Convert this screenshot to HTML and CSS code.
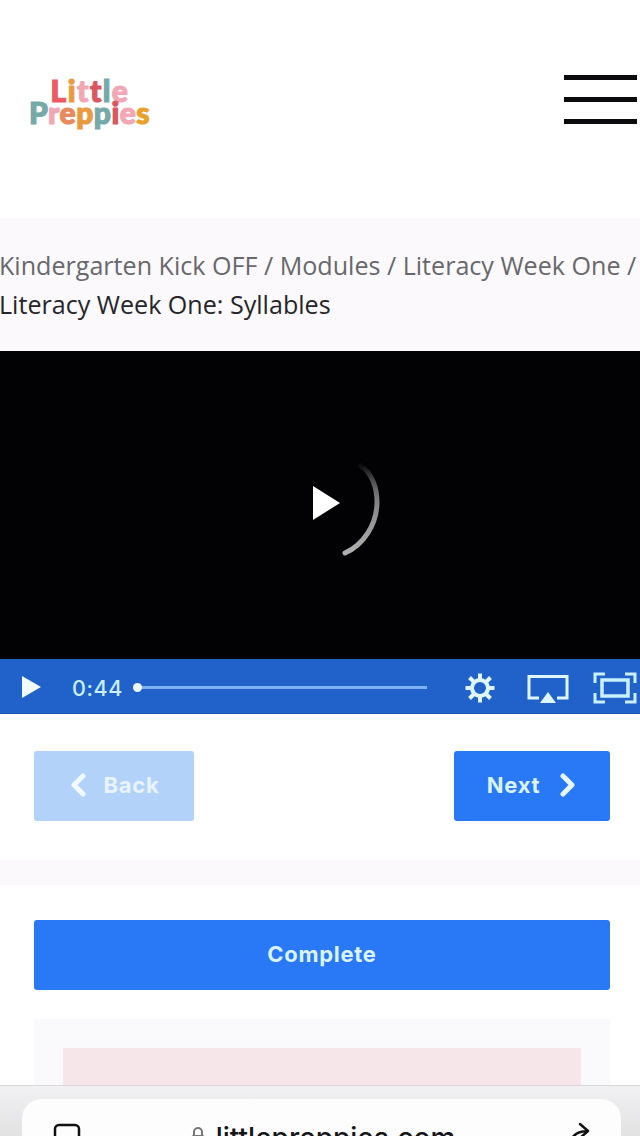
FILE: index.html
```html
<!DOCTYPE html>
<html lang="en">
<head>
<meta charset="utf-8">
<title>Literacy Week One: Syllables</title>
<link rel="stylesheet" href="styles.css">
</head>
<body>
<div class="page">
  <header class="site-header">
    <div class="logo">
      <div class="logo-line logo-top"><span class="c-red">L</span><span class="c-orange">i</span><span class="c-pink">t</span><span class="c-red2">t</span><span class="c-teal">l</span><span class="c-pink">e</span></div>
      <div class="logo-line"><span class="c-teal">P</span><span class="c-pink">r</span><span class="c-coral">e</span><span class="c-orange">p</span><span class="c-teal">p</span><span class="c-red2">i</span><span class="c-pink">e</span><span class="c-gold">s</span></div>
    </div>
    <div class="burger"><i></i><i></i><i></i></div>
  </header>

  <nav class="crumbs">
    <div class="crumb-path">Kindergarten Kick OFF / Modules / Literacy Week One /</div>
    <div class="crumb-current">Literacy Week One: Syllables</div>
  </nav>

  <section class="player">
    <div class="video">
      <svg class="spinner" width="120" height="130" viewBox="0 0 120 130">
        <defs>
          <linearGradient id="arc" x1="0" y1="0" x2="0" y2="1">
            <stop offset="0" stop-color="#fff" stop-opacity="0.04"/>
            <stop offset="0.55" stop-color="#8e8e8e"/>
            <stop offset="1" stop-color="#b0b0b0"/>
          </linearGradient>
        </defs>
        <path d="M81 26C92 33 97 48 97 62C97 85 83 105 65 113" fill="none" stroke="url(#arc)" stroke-width="5" stroke-linecap="round"/>
        <polygon points="33,46 60,63 33,80" fill="#fff"/>
      </svg>
    </div>
    <div class="controls">
      <svg class="ctl-play" width="20" height="24" viewBox="0 0 20 24"><polygon points="1,1 20,12 1,23" fill="#f2fbff"/></svg>
      <span class="time">0:44</span>
      <div class="track"><b class="knob"></b></div>
      <svg class="ctl-gear" width="32" height="32" viewBox="0 0 32 32" fill="none" stroke="#dff6ff">
        <circle cx="16" cy="16" r="8" stroke-width="4"/>
        <path d="M16 1.500v6M16 24.500v6M1.500 16h6M24.500 16h6M5.500 5.500l4.500 4.500M22 22l4.500 4.500M5.500 26.500l4.500-4.500M22 10l4.500-4.500" stroke-width="4"/>
      </svg>
      <svg class="ctl-air" width="44" height="30" viewBox="0 0 44 30" fill="none" stroke="#dff6ff" stroke-width="3">
        <path d="M13 25H3V3.500H41V25H31"/>
        <polygon points="22,19 30,30 14,30" fill="#dff6ff" stroke="none"/>
      </svg>
      <svg class="ctl-full" width="44" height="32" viewBox="0 0 44 32" fill="none" stroke="#c9f0ff" stroke-width="3">
        <path d="M12 2H2V11M32 2H42V11M12 30H2V21M32 30H42V21"/>
        <rect x="9" y="8" width="26" height="16" stroke-width="3.500"/>
      </svg>
    </div>
  </section>

  <div class="pager">
    <a class="btn btn-back">
      <svg class="chev" width="18" height="24" viewBox="0 0 18 24" fill="none" stroke="#f2f8ff" stroke-width="5" stroke-linecap="round" stroke-linejoin="round"><path d="M14 3L5 12L14 21"/></svg>
      <span>Back</span>
    </a>
    <a class="btn btn-next">
      <span>Next</span>
      <svg class="chev" width="18" height="24" viewBox="0 0 18 24" fill="none" stroke="#e6f7ff" stroke-width="5" stroke-linecap="round" stroke-linejoin="round"><path d="M4 3L13 12L4 21"/></svg>
    </a>
  </div>

  <div class="band"></div>

  <section class="panel">
    <a class="btn btn-complete">Complete</a>
    <div class="lesson-card">
      <div class="notice"></div>
    </div>
  </section>
</div>

<div class="browser-bar">
  <div class="url-pill">
    <svg class="tabs-icon" width="28" height="28" viewBox="0 0 28 28" fill="none" stroke="#111" stroke-width="2.500"><rect x="2" y="2" width="24" height="24" rx="4"/></svg>
    <div class="url">
      <svg class="lock" width="14" height="20" viewBox="0 0 14 20" fill="none" stroke="#777" stroke-width="2"><path d="M3 10V6a4 4 0 0 1 8 0v4"/><rect x="1" y="10" width="12" height="9" rx="2"/></svg>
      <span>littlepreppies.com</span>
    </div>
    <svg class="share-icon" width="26" height="28" viewBox="0 0 26 28" fill="none" stroke="#111" stroke-width="2.500" stroke-linecap="round" stroke-linejoin="round"><path d="M15 2L23 9L15 16M23 9C12 9 5 14 4 26"/></svg>
  </div>
</div>
</body>
</html>
```

FILE: styles.css
```css
* { box-sizing: border-box; }
html, body { margin: 0; padding: 0; }
body {
  width: 640px;
  height: 1136px;
  overflow: hidden;
  position: relative;
  background: #fff;
  font-family: "Open Sans", "Liberation Sans", sans-serif;
}
.page { display: flex; flex-direction: column; }

.site-header {
  height: 218px;
  background: #fff;
  display: flex;
  align-items: flex-start;
  justify-content: space-between;
  padding: 75px 3px 0 29px;
}
.logo {
  font-family: "Lato", sans-serif;
  font-weight: 900;
  font-size: 30px;
  line-height: 21px;
  letter-spacing: 0.5px;
  width: 120px;
  text-align: center;
  padding-top: 5px;
  -webkit-text-stroke: 1.2px currentColor;
}
.logo-line { height: 22px; }
.logo-top { padding-left: 2px; letter-spacing: 1.5px; }
.c-red { color: #ee5a63; }
.c-red2 { color: #d9585f; }
.c-orange { color: #ea9a3f; }
.c-pink { color: #f2a7b5; }
.c-teal { color: #76aaa9; }
.c-coral { color: #e78a60; }
.c-gold { color: #e9a32c; }

.burger {
  width: 73px;
  display: flex;
  flex-direction: column;
  gap: 17px;
}
.burger i {
  display: block;
  height: 5px;
  background: #0b0b0d;
}

.crumbs {
  height: 133px;
  background: #fbf9fc;
  padding-top: 28px;
  margin-left: 0;
  font-size: 25.1px;
  line-height: 39px;
  white-space: nowrap;
  text-indent: -1px;
}
.crumb-path { color: #68686c; }
.crumb-current { color: #26262a; }

.video {
  height: 308px;
  background: #020104;
  display: flex;
  justify-content: center;
  padding-top: 89px;
}
.spinner { margin-left: 40px; display: block; }

.controls {
  height: 55px;
  background: #2062c9;
  border-bottom: 1px solid #1d55ad;
  display: flex;
  align-items: center;
  padding: 4px 0 0 21px;
}
.ctl-play { flex: none; margin-top: -2px; }
.time {
  margin-left: 31px;
  width: 55px;
  flex: none;
  font-family: "Inter", sans-serif;
  font-size: 21.5px;
  font-weight: 500;
  letter-spacing: 0.6px;
  color: #c9efff;
}
.track {
  position: relative;
  width: 290px;
  height: 3px;
  margin: -2px 0 0 10px;
  flex: none;
  background: #7fb0f0;
}
.knob {
  position: absolute;
  left: -4px;
  top: -3px;
  width: 9px;
  height: 9px;
  border-radius: 50%;
  background: #eefaff;
}
.ctl-gear { margin-left: 37px; flex: none; }
.ctl-air { margin-left: 30px; flex: none; }
.ctl-full { margin-left: 23px; flex: none; }

.pager {
  height: 146px;
  background: #fff;
  display: flex;
  justify-content: space-between;
  padding: 37px 30px 0 34px;
}
.btn {
  display: flex;
  align-items: center;
  justify-content: center;
  height: 70px;
  padding-bottom: 3px;
  border-radius: 3px;
  font-family: "Inter", sans-serif;
  font-weight: 700;
  font-size: 22px;
  letter-spacing: 0.7px;
}
.btn-back {
  width: 160px;
  gap: 17px;
  background: #b3d2fa;
  color: #e9f3fe;
}
.btn-next {
  width: 156px;
  gap: 19px;
  background: #2979f6;
  color: #d9f3ff;
}
.band {
  height: 25px;
  background: #fbf9fc;
}
.panel {
  background: #fff;
  padding: 35px 30px 0 34px;
}
.btn-complete {
  background: #2979f6;
  color: #d9f3ff;
}
.lesson-card {
  margin-top: 29px;
  height: 200px;
  background: #faf9fb;
  padding: 29px 29px 0 29px;
}
.notice {
  height: 120px;
  background: #f6e6ea;
}

.browser-bar {
  position: absolute;
  left: 0;
  right: 0;
  bottom: 0;
  height: 51px;
  background: linear-gradient(#f1f0f2, #e2e2e3);
  border-top: 1px solid #dcd6d9;
  padding: 13px 19px 0 22px;
}
.url-pill {
  height: 60px;
  border-radius: 20px 20px 0 0;
  background: #fefdfe;
  display: flex;
  align-items: flex-start;
  justify-content: space-between;
  padding: 24px 30px 0 31px;
}
.url {
  display: flex;
  align-items: flex-start;
  gap: 11px;
  font-size: 28px;
  line-height: 30px;
  font-family: "Inter", "Open Sans", sans-serif;
  font-weight: 500;
  color: #16161a;
}
.lock { margin-top: 3px; }
.tabs-icon, .share-icon { display: block; }
.share-icon { margin-top: -1px; }
```
